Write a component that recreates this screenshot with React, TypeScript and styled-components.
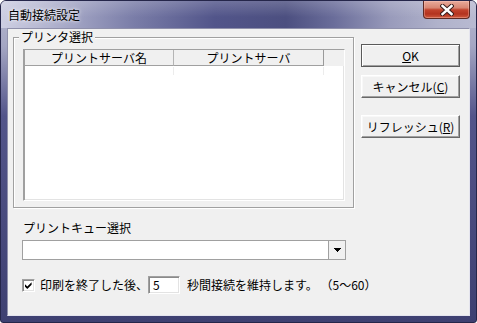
import React from "react";
import styled, { createGlobalStyle } from "styled-components";

const Global = createGlobalStyle`
  html, body { margin: 0; padding: 0; background: #ffffff; }
  body {
    font-family: "Noto Sans CJK JP", "Noto Sans", sans-serif;
    font-size: 12px;
    color: #000;
  }
`;

const Window = styled.div`
  width: 477px;
  height: 323px;
  box-sizing: border-box;
  display: flex;
  flex-direction: column;
  border: 1px solid #25264a;
  border-radius: 6px 6px 3px 3px;
  overflow: hidden;
  background: linear-gradient(180deg, #b6b8d0 0px, #a4a6c3 45px, #53558a 115px, #3e4071 100%);
`;

const TitleBar = styled.div`
  height: 27px;
  flex: none;
  display: flex;
  align-items: flex-start;
  background:
    linear-gradient(180deg, rgba(255,255,255,0.18) 0%, rgba(255,255,255,0) 60%),
    linear-gradient(90deg, #cdcee2 0%, #b2b4cf 10%, #7a7da8 28%, #52558a 45%, #4c4f80 60%, #6a6d9a 70%, #999bbb 82%, #b0b2cb 92%, #b8bad1 100%);
`;

const Title = styled.div`
  align-self: center;
  padding-left: 7px;
  line-height: 14px;
  font-size: 12px;
  color: #000;
  text-shadow: 0 0 3px rgba(255, 255, 255, 0.9), 0 0 6px rgba(255, 255, 255, 0.6);
`;

const CloseButton = styled.div`
  margin-left: auto;
  margin-right: 6px;
  width: 47px;
  height: 18px;
  box-sizing: border-box;
  border: 1px solid #5e2a24;
  border-top: none;
  border-radius: 0 0 4px 4px;
  background: linear-gradient(180deg, #e9ab9b 0%, #d88673 40%, #c2432d 52%, #b3331f 76%, #cf5a3e 100%);
  box-shadow: inset 0 0 0 1px rgba(255, 210, 200, 0.35);
  display: flex;
  align-items: center;
  justify-content: center;
`;

const Frame = styled.div`
  flex: 1;
  display: flex;
  padding: 0 6px 6px;
`;

const Client = styled.div`
  flex: 1;
  background: #f0f0f0;
  border: 1px solid;
  border-color: #8f90ab #e4e4ee #e4e4ee #8f90ab;
  display: grid;
  grid-template-columns: 346px 99px;
  column-gap: 7px;
  align-items: start;
`;

const LeftCol = styled.div`
  display: flex;
  flex-direction: column;
  align-items: flex-start;
  padding: 8px 0 0 5px;
`;

const GroupBox = styled.div`
  box-sizing: border-box;
  width: 341px;
  height: 171px;
  border: 1px solid #a0a0a0;
  box-shadow: inset 1px 1px 0 #ffffff, 1px 1px 0 #ffffff;
  padding: 0 8px 6px 9px;
  display: flex;
  flex-direction: column;
  align-items: flex-start;
`;

const Caption = styled.div`
  margin: -7px 0 0 -4px;
  padding: 0 2px;
  height: 12px;
  line-height: 12px;
  background: #f0f0f0;
`;

const ListView = styled.div`
  margin-top: 6px;
  width: 322px;
  height: 152px;
  box-sizing: border-box;
  background: #ffffff;
  border: 1px solid;
  border-color: #a0a0a0 #ffffff #ffffff #a0a0a0;
  box-shadow: inset 1px 0 0 #a0a0a0, inset -1px -1px 0 #e3e3e3;
  padding-left: 1px;
  display: flex;
  flex-direction: column;
`;

const HeaderRow = styled.div`
  display: flex;
  height: 16px;
  background: #f0f0f0;
`;

const HeaderCell = styled.div<{ $w: number; $edge?: boolean }>`
  width: ${(p) => p.$w}px;
  box-sizing: border-box;
  height: 16px;
  line-height: 15px;
  text-align: center;
  border-bottom: 1px solid #a0a0a0;
  border-right: 1px solid ${(p) => (p.$edge ? "#9a9a9a" : "#b4b4b4")};
  white-space: nowrap;
`;

const HeaderFiller = styled.div`
  flex: 1;
  background: #f0f0f0;
`;

const GridStubRow = styled.div`
  display: flex;
  height: 8px;
  margin-top: 1px;
`;

const GridStub = styled.div<{ $w: number }>`
  width: ${(p) => p.$w}px;
  box-sizing: border-box;
  border-right: 1px solid #ececec;
`;

const FieldLabel = styled.div`
  margin: 14px 0 0 10px;
  line-height: 12px;
  height: 12px;
`;

const Combo = styled.div`
  margin: 6px 0 0 9px;
  width: 324px;
  height: 20px;
  box-sizing: border-box;
  border: 1px solid #a0a0a0;
  background: #ffffff;
  display: flex;
`;

const ComboText = styled.div`
  flex: 1;
`;

const ComboArrow = styled.div`
  width: 16px;
  border-left: 1px solid #a0a0a0;
  background: #f0f0f0;
  display: flex;
  align-items: center;
  justify-content: center;
`;

const CheckRow = styled.div`
  margin: 16px 0 0 9px;
  height: 18px;
  display: flex;
  align-items: center;
  white-space: nowrap;
`;

const CheckBox = styled.div`
  width: 13px;
  height: 13px;
  box-sizing: border-box;
  border: 1px solid;
  border-color: #a0a0a0 #ffffff #ffffff #a0a0a0;
  box-shadow: inset 1px 1px 0 #8a8a8a, inset -1px -1px 0 #e3e3e3;
  background: #ffffff;
  display: flex;
`;

const RowText = styled.span<{ $ml: number }>`
  margin-left: ${(p) => p.$ml}px;
  line-height: 14px;
`;

const NumBox = styled.div`
  width: 32px;
  height: 18px;
  box-sizing: border-box;
  border: 1px solid;
  border-color: #a0a0a0 #ffffff #ffffff #a0a0a0;
  box-shadow: inset 1px 1px 0 #8a8a8a, inset -1px -1px 0 #e3e3e3;
  background: #ffffff;
  padding-left: 4px;
  line-height: 16px;
`;

const RightCol = styled.div`
  display: flex;
  flex-direction: column;
  padding-top: 15px;
`;

const Button = styled.div<{ $default?: boolean; $mt: number }>`
  margin-top: ${(p) => p.$mt}px;
  height: 23px;
  box-sizing: border-box;
  background: #f0f0f0;
  display: flex;
  align-items: center;
  justify-content: center;
  line-height: 14px;
  white-space: nowrap;
  border: 1px solid;
  border-color: ${(p) =>
    p.$default ? "#5a5a5a" : "#ffffff #696969 #696969 #ffffff"};
  box-shadow: ${(p) =>
    p.$default
      ? "inset 1px 1px 0 #ffffff, inset -1px -1px 0 #a0a0a0"
      : "inset -1px -1px 0 #a0a0a0, inset 1px 1px 0 #f8f8f8"};
`;

const CloseGlyph = () => (
  <svg width="14" height="12" viewBox="0 0 14 12">
    <path d="M2.5 2 L11.5 10 M11.5 2 L2.5 10" stroke="#3a1e1c" strokeWidth="4.4" strokeLinecap="square" />
    <path d="M2.5 2 L11.5 10 M11.5 2 L2.5 10" stroke="#ffffff" strokeWidth="2.4" strokeLinecap="square" />
  </svg>
);

const DropGlyph = () => (
  <svg width="9" height="4" viewBox="0 0 9 4" shapeRendering="crispEdges">
    <rect x="1" y="0" width="7" height="1" fill="#000" />
    <rect x="2" y="1" width="5" height="1" fill="#000" />
    <rect x="3" y="2" width="3" height="1" fill="#000" />
    <rect x="4" y="3" width="1" height="1" fill="#000" />
  </svg>
);

const CheckGlyph = () => (
  <svg width="11" height="11" viewBox="0 0 11 11">
    <polygon points="2,4.3 4.3,6.6 8.6,2.3 8.6,4.8 4.3,9.1 2,6.8" fill="#000" />
  </svg>
);

export default function App() {
  return (
    <>
      <Global />
      <Window>
        <TitleBar>
          <Title>自動接続設定</Title>
          <CloseButton>
            <CloseGlyph />
          </CloseButton>
        </TitleBar>
        <Frame>
          <Client>
            <LeftCol>
              <GroupBox>
                <Caption>プリンタ選択</Caption>
                <ListView>
                  <HeaderRow>
                    <HeaderCell $w={149}>プリントサーバ名</HeaderCell>
                    <HeaderCell $w={150} $edge>
                      プリントサーバ
                    </HeaderCell>
                    <HeaderFiller />
                  </HeaderRow>
                  <GridStubRow>
                    <GridStub $w={149} />
                    <GridStub $w={150} />
                  </GridStubRow>
                </ListView>
              </GroupBox>
              <FieldLabel>プリントキュー選択</FieldLabel>
              <Combo>
                <ComboText />
                <ComboArrow>
                  <DropGlyph />
                </ComboArrow>
              </Combo>
              <CheckRow>
                <CheckBox>
                  <CheckGlyph />
                </CheckBox>
                <RowText $ml={5}>印刷を終了した後、</RowText>
                <NumBox>5</NumBox>
                <RowText $ml={7}>秒間接続を維持します。 （5〜60）</RowText>
              </CheckRow>
            </LeftCol>
            <RightCol>
              <Button $default $mt={0}>
                <u>O</u>K
              </Button>
              <Button $mt={8}>
                キャンセル(<u>C</u>)
              </Button>
              <Button $mt={17}>
                リフレッシュ(<u>R</u>)
              </Button>
            </RightCol>
          </Client>
        </Frame>
      </Window>
    </>
  );
}
